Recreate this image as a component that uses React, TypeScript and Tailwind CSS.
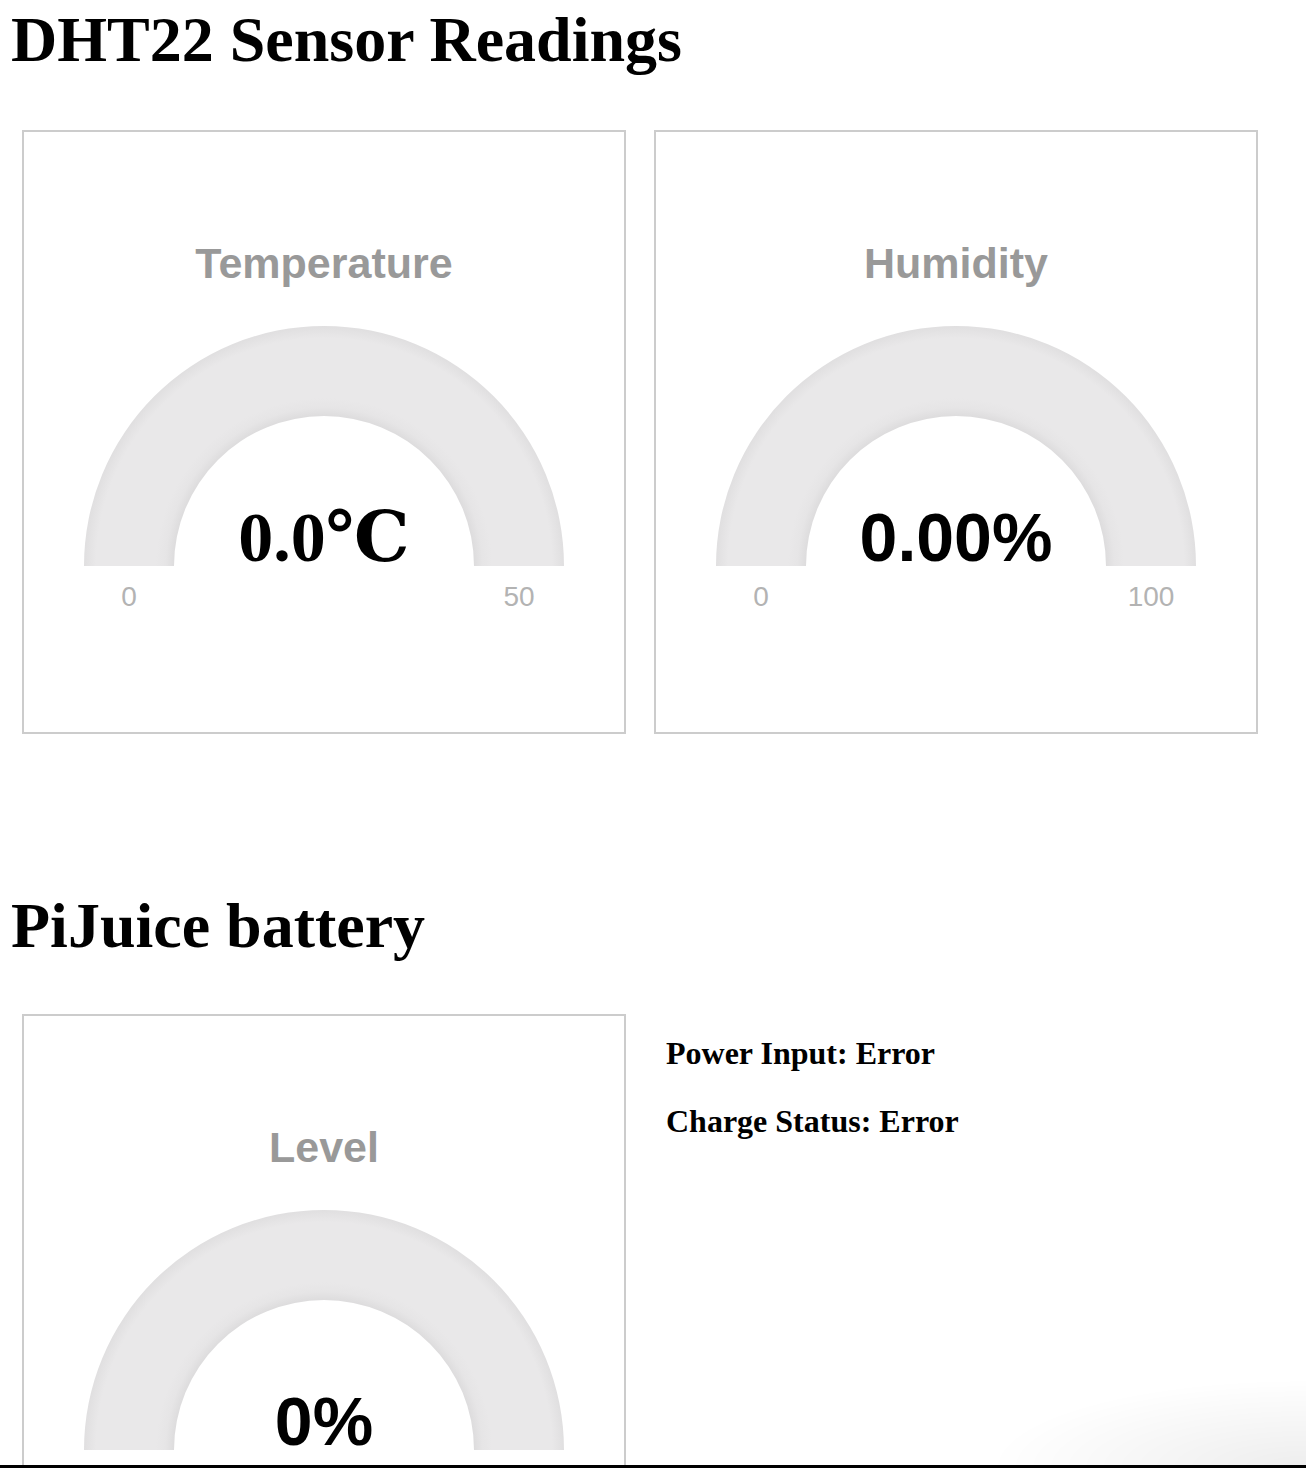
import React from "react";

type GaugeProps = {
  id: string;
  title: string;
  value: string;
  min: string;
  max: string;
  serifValue?: boolean;
};

const GaugeCard = ({ id, title, value, min, max, serifValue }: GaugeProps) => {
  return (
    <div className="h-[604px] w-[604px] shrink-0 border-2 border-[#cccccc] bg-white">
      <svg width="600" height="600" viewBox="0 0 600 600" className="block">
        <defs>
          <radialGradient
            id={`band-${id}`}
            gradientUnits="userSpaceOnUse"
            cx="300"
            cy="434"
            r="240"
          >
            <stop offset="0.62" stopColor="#dcdbdc" />
            <stop offset="0.66" stopColor="#e6e5e6" />
            <stop offset="0.7" stopColor="#e9e8e9" />
            <stop offset="0.95" stopColor="#e9e8e9" />
            <stop offset="1" stopColor="#e0dfe0" />
          </radialGradient>
        </defs>

        <text
          x="300"
          y="146"
          textAnchor="middle"
          fill="#999999"
          fontFamily="'Liberation Sans', Arial, sans-serif"
          fontWeight="700"
          fontSize="43"
        >
          {title}
        </text>

        {/* gauge band */}
        <path
          d="M 60 434 A 240 240 0 0 1 540 434 L 450 434 A 150 150 0 0 0 150 434 Z"
          fill={`url(#band-${id})`}
        />

        <text
          x="300"
          y="429"
          textAnchor="middle"
          fill="#000000"
          fontFamily={
            serifValue
              ? "'Liberation Serif', 'DejaVu Serif', serif"
              : "'Liberation Sans', Arial, sans-serif"
          }
          fontWeight="700"
          fontSize={serifValue ? 70 : 68}
        >
          {value}
        </text>

        <text
          x="105"
          y="474"
          textAnchor="middle"
          fill="#b3b3b3"
          fontFamily="'Liberation Sans', Arial, sans-serif"
          fontSize="28"
        >
          {min}
        </text>
        <text
          x="495"
          y="474"
          textAnchor="middle"
          fill="#b3b3b3"
          fontFamily="'Liberation Sans', Arial, sans-serif"
          fontSize="28"
        >
          {max}
        </text>
      </svg>
    </div>
  );
};

const App = () => {
  return (
    <div className="relative min-h-[1468px] bg-white font-['Liberation_Serif','Times_New_Roman',serif] text-black">
      <h1 className="pl-[11px] pt-[4px] text-[64px] font-bold leading-[72px]">
        DHT22 Sensor Readings
      </h1>

      <div className="mt-[54px] flex gap-[28px] pl-[22px]">
        <GaugeCard id="temp" title="Temperature" value="0.0℃" min="0" max="50" serifValue />
        <GaugeCard id="hum" title="Humidity" value="0.00%" min="0" max="100" />
      </div>

      <h1 className="mt-[156px] pl-[11px] text-[64px] font-bold leading-[72px]">
        PiJuice battery
      </h1>

      <div className="mt-[52px] flex pl-[22px]">
        <GaugeCard id="level" title="Level" value="0%" min="0" max="100" />
        <div className="flex flex-col gap-[28px] pl-[40px] pt-[19px] text-[32px] font-bold leading-[40px]">
          <p>Power Input: Error</p>
          <p>Charge Status: Error</p>
        </div>
      </div>

      {/* window edge at the bottom of the capture */}
      <div className="pointer-events-none fixed bottom-0 right-0 h-[90px] w-[320px] bg-[radial-gradient(ellipse_at_bottom_right,rgba(0,0,0,0.07),rgba(0,0,0,0)_70%)]" />
      <div className="pointer-events-none fixed bottom-0 left-0 right-0 h-[3px] bg-black" />
    </div>
  );
};

export default App;
